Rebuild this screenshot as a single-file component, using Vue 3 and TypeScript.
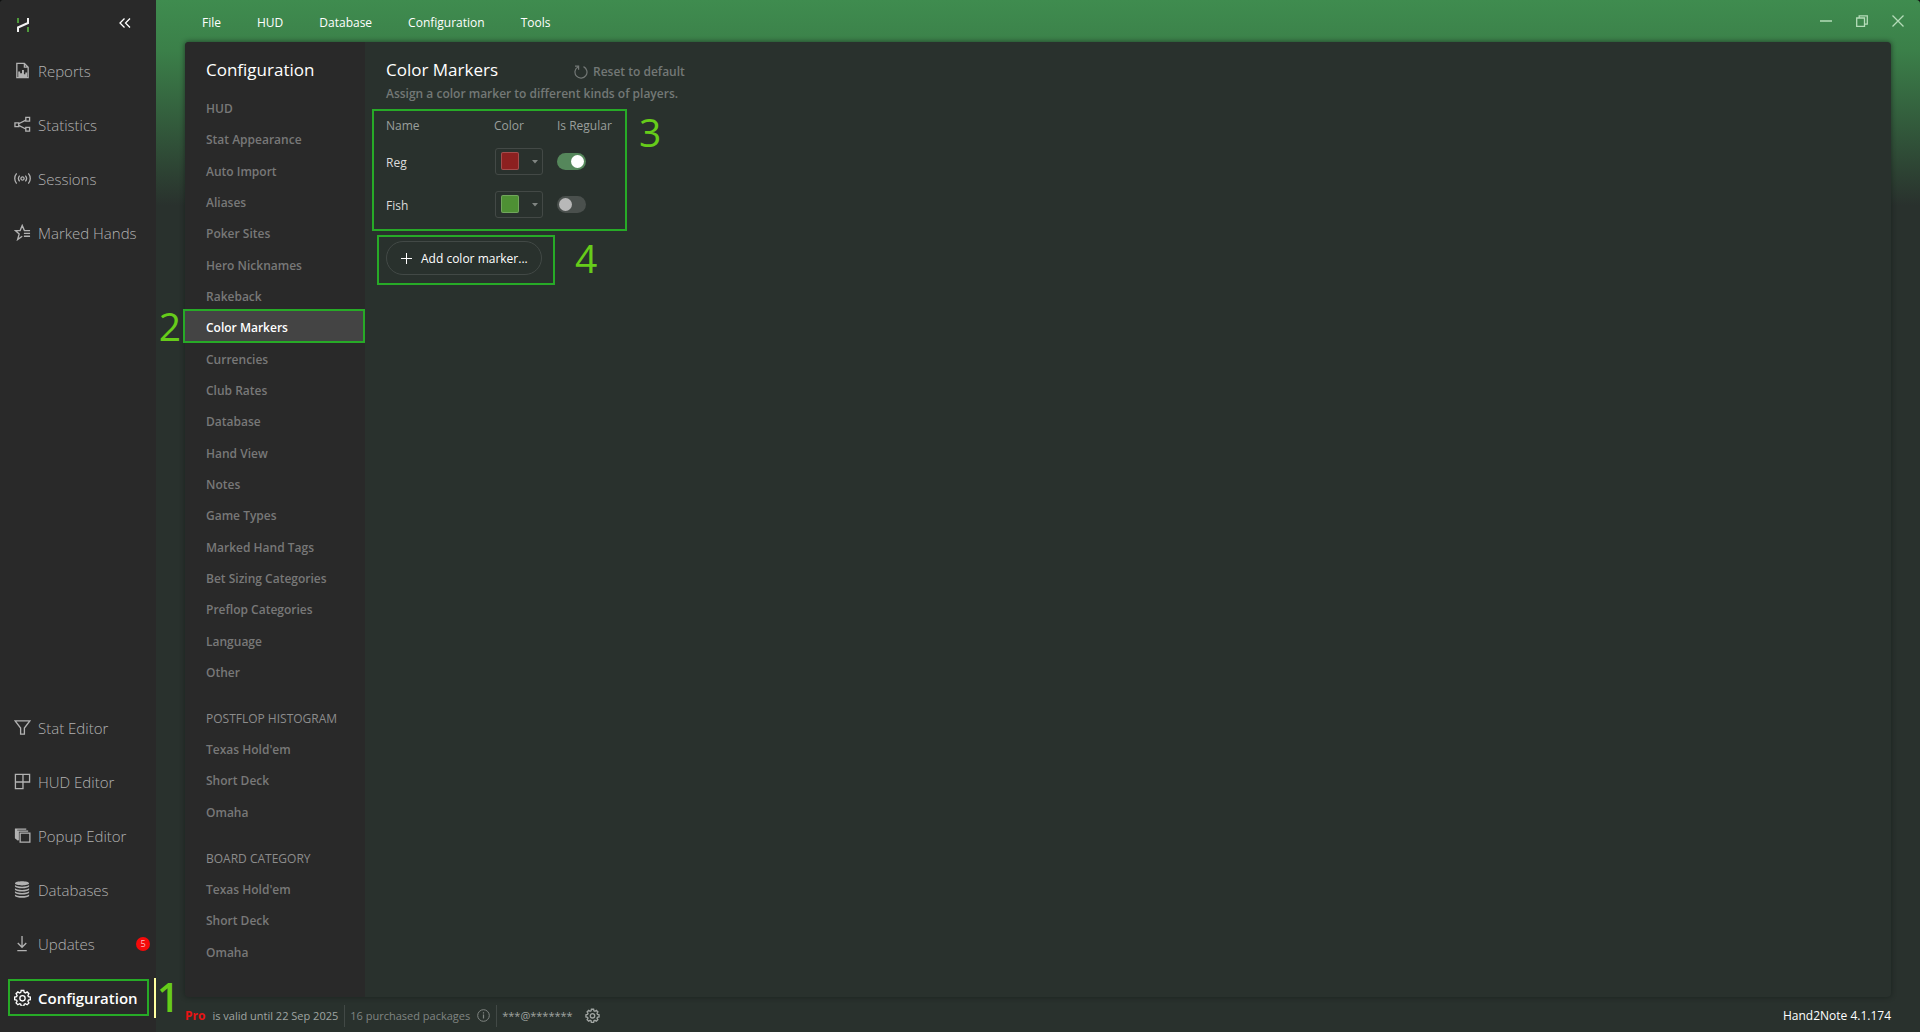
<script setup lang="ts">
import { ref } from 'vue'

interface SideItem {
  label: string
  stroke?: string
  fill?: string
  badge?: number
  active?: boolean
}

interface NavGroup {
  title?: string
  items: string[]
}

interface Marker {
  name: string
  color: string
  regular: boolean
}

const gear =
  'M7.6 1.6h2.8l.4 2 1.3.6 1.8-1.1 1.9 1.9-1.1 1.8.6 1.3 2 .4v2.8l-2 .4-.6 1.3 1.1 1.8-1.9 1.9-1.8-1.1-1.3.6-.4 2H7.6l-.4-2-1.3-.6-1.8 1.1-1.9-1.9 1.1-1.8-.6-1.3-2-.4V8.5l2-.4.6-1.3L2.2 5l1.9-1.9 1.8 1.1 1.3-.6zM11.8 9.9a2.800 2.800 0 1 1-5.6 0a2.800 2.800 0 1 1 5.6 0z'

const topItems: SideItem[] = [
  {
    label: 'Reports',
    stroke: 'M3 1.5h8l4 4v11H3z M11 1.5v4h4',
    fill: 'M4.5 16V10h2v2h2V8.5h2V13h1.500v-2H14v5z',
  },
  {
    label: 'Statistics',
    stroke: 'M1 7.2h4v4H1z M12.5 1.5h4v4h-4z M12.5 12h4v4h-4z M5 8.2l7.5-3.8 M5 10l7.5 3.8',
  },
  {
    label: 'Sessions',
    stroke:
      'M10.7 9a1.700 1.700 0 1 1-3.4 0a1.700 1.700 0 1 1 3.400 0z M6 6a4.500 4.500 0 0 0 0 6 M12 6a4.500 4.500 0 0 1 0 6 M2.8 3.5a8.500 8.500 0 0 0 0 11 M15.2 3.5a8.500 8.500 0 0 1 0 11',
  },
  {
    label: 'Marked Hands',
    stroke: 'M17 7h-6L8.7 1.5 6.5 7H1.500l4 3.500-1.700 6 4.900-3.600 M10.500 10H17 M10.500 13H17',
  },
]

const bottomItems: SideItem[] = [
  { label: 'Stat Editor', stroke: 'M1.200 2h15.600L11 9.500v6.500H7V9.500z' },
  { label: 'HUD Editor', stroke: 'M1.500 1.500h15v8h-7v7h-8z M9.500 1.500v8 M1.500 9.500h8' },
  {
    label: 'Popup Editor',
    stroke: 'M6.500 6.500h10.300v9.500H6.500z M4.200 14V4.400H15 M1.700 12V2.200H13',
    fill: 'M1 2h2.500v2H5v10H3.500L1 12z',
  },
  {
    label: 'Databases',
    fill: 'M1 2.500c0-3 15-3 15 0s-15 3-15 0z M1 4.300c2.500 2.400 12.500 2.400 15 0v1.600c-1.500 2.500-13.500 2.500-15 0z M1 7.600c2.500 2.400 12.500 2.400 15 0v1.600c-1.500 2.500-13.500 2.500-15 0z M1 10.900c2.500 2.400 12.500 2.400 15 0v1.600c-1.500 2.500-13.500 2.500-15 0z M1 14.200c2.500 2.400 12.500 2.400 15 0v1.600c-1.500 2.500-13.500 2.500-15 0z',
  },
  { label: 'Updates', stroke: 'M8.500 1v12 M4 8.500l4.500 4.500 4.500-4.500 M3.500 16.500h10', badge: 5 },
  { label: 'Configuration', stroke: gear, active: true },
]

const menus = ['File', 'HUD', 'Database', 'Configuration', 'Tools']

const groups: NavGroup[] = [
  {
    items: [
      'HUD', 'Stat Appearance', 'Auto Import', 'Aliases', 'Poker Sites', 'Hero Nicknames',
      'Rakeback', 'Color Markers', 'Currencies', 'Club Rates', 'Database', 'Hand View', 'Notes',
      'Game Types', 'Marked Hand Tags', 'Bet Sizing Categories', 'Preflop Categories', 'Language',
      'Other',
    ],
  },
  { title: 'POSTFLOP HISTOGRAM', items: ["Texas Hold'em", 'Short Deck', 'Omaha'] },
  { title: 'BOARD CATEGORY', items: ["Texas Hold'em", 'Short Deck', 'Omaha'] },
]

const palette = ['#8c2020', '#4e9034']

const markers = ref<Marker[]>([
  { name: 'Reg', color: '#8c2020', regular: true },
  { name: 'Fish', color: '#4e9034', regular: false },
])
</script>

<template>
  <div class="window">
    <aside class="sidebar">
      <header class="brand">
        <svg width="14" height="14" viewBox="0 0 14 14" fill="none" stroke-width="2">
          <path d="M2 0v5M12 9v5" stroke="#4f9a3c" />
          <path d="M2 14V9.500L12 5V0" stroke="#f2f2f2" />
        </svg>
        <button type="button" class="collapse" aria-label="Collapse sidebar">
          <svg width="12" height="10" viewBox="0 0 12 10" fill="none" stroke="currentColor" stroke-width="1.300">
            <path d="M5.500.5 1 5l4.500 4.500M11 .5 6.500 5 11 9.500" />
          </svg>
        </button>
      </header>
      <nav class="side-nav">
        <a v-for="item in topItems" :key="item.label" href="#" class="side-link">
          <svg class="side-icon" viewBox="0 0 18 18">
            <path v-if="item.fill" :d="item.fill" fill="currentColor" />
            <path v-if="item.stroke" :d="item.stroke" fill="none" stroke="currentColor" stroke-width="1.400" />
          </svg>
          <span>{{ item.label }}</span>
        </a>
        <div class="spacer"></div>
        <a
          v-for="item in bottomItems"
          :key="item.label"
          href="#"
          class="side-link"
          :class="{ active: item.active }"
        >
          <svg class="side-icon" viewBox="0 0 18 18">
            <path v-if="item.fill" :d="item.fill" fill="currentColor" />
            <path v-if="item.stroke" :d="item.stroke" fill="none" stroke="currentColor" stroke-width="1.400" />
          </svg>
          <span>{{ item.label }}</span>
          <span v-if="item.badge" class="badge">{{ item.badge }}</span>
          <template v-if="item.active">
            <span class="frame frame-side"></span>
            <span class="step step-side">1</span>
          </template>
        </a>
      </nav>
    </aside>

    <div class="main">
      <header class="titlebar">
        <nav class="menu">
          <button v-for="menu in menus" :key="menu" type="button">{{ menu }}</button>
        </nav>
        <div class="controls">
          <button type="button" aria-label="Minimize">
            <svg width="12" height="12" viewBox="0 0 12 12"><path d="M0 6h12" /></svg>
          </button>
          <button type="button" aria-label="Restore">
            <svg width="12" height="12" viewBox="0 0 12 12">
              <path d="M.7 3h7.800v8.300H.7zM3.200 3V.9h8.100v8.200H8.500" />
            </svg>
          </button>
          <button type="button" aria-label="Close">
            <svg width="12" height="12" viewBox="0 0 12 12"><path d="M.5.5l11 11M11.500.5l-11 11" /></svg>
          </button>
        </div>
      </header>

      <div class="panel">
        <nav class="config-nav">
          <h2>Configuration</h2>
          <section v-for="(group, g) in groups" :key="g">
            <h3 v-if="group.title">{{ group.title }}</h3>
            <ul>
              <li v-for="entry in group.items" :key="entry">
                <a href="#" :class="{ current: entry === 'Color Markers' }">
                  {{ entry }}
                  <template v-if="entry === 'Color Markers'">
                    <span class="frame frame-nav"></span>
                    <span class="step step-nav">2</span>
                  </template>
                </a>
              </li>
            </ul>
          </section>
        </nav>

        <main class="content">
          <div class="heading">
            <h1>Color Markers</h1>
            <button type="button" class="reset">
              <svg width="14" height="14" viewBox="0 0 14 14" fill="none" stroke="currentColor" stroke-width="1.200">
                <path d="M9.500 1.600a6 6 0 1 1-5.600.3M1 1.200h3.600v3.600" />
              </svg>
              Reset to default
            </button>
          </div>
          <p class="hint">Assign a color marker to different kinds of players.</p>

          <div class="marker-block">
            <table>
              <thead>
                <tr>
                  <th class="col-name">Name</th>
                  <th class="col-color">Color</th>
                  <th class="col-regular">Is Regular</th>
                </tr>
              </thead>
              <tbody>
                <tr v-for="marker in markers" :key="marker.name">
                  <td class="name">{{ marker.name }}</td>
                  <td>
                    <div class="picker">
                      <select v-model="marker.color" :aria-label="marker.name + ' color'">
                        <option v-for="c in palette" :key="c" :value="c" :aria-label="c"></option>
                      </select>
                      <span class="swatch" :style="{ background: marker.color }"></span>
                      <svg class="caret" width="6" height="4" viewBox="0 0 6 4">
                        <path d="M0 0h6L3 3.500z" fill="currentColor" />
                      </svg>
                    </div>
                  </td>
                  <td>
                    <input
                      v-model="marker.regular"
                      type="checkbox"
                      class="switch"
                      :aria-label="marker.name + ' is regular'"
                    />
                  </td>
                </tr>
              </tbody>
            </table>
            <span class="frame frame-table"></span>
            <span class="step step-table">3</span>
          </div>

          <div class="add-block">
            <button type="button" class="add">
              <svg width="11" height="11" viewBox="0 0 11 11" stroke="currentColor">
                <path d="M5.500 0v11M0 5.500h11" />
              </svg>
              Add color marker...
            </button>
            <span class="frame frame-add"></span>
            <span class="step step-add">4</span>
          </div>
        </main>
      </div>

      <footer class="status">
        <div class="cell license"><strong>Pro</strong><span>is valid until 22 Sep 2025</span></div>
        <div class="cell packages">
          <span>16 purchased packages</span>
          <svg width="13" height="13" viewBox="0 0 13 13" fill="none" stroke="currentColor">
            <circle cx="6.500" cy="6.500" r="5.800" />
            <path d="M6.500 5.500v4M6.500 3.200v1.200" stroke-width="1.200" />
          </svg>
        </div>
        <div class="cell account">
          <span>***@*******</span>
          <button type="button" aria-label="Account settings">
            <svg width="15" height="15" viewBox="0 0 18 19">
              <path :d="gear" fill="none" stroke="currentColor" stroke-width="1.700" />
            </svg>
          </button>
        </div>
        <span class="version">Hand2Note 4.1.174</span>
      </footer>
    </div>
  </div>
</template>

<style>
body {
  margin: 0;
  background: #101010;
}
</style>

<style scoped>
.window {
  display: flex;
  min-height: 100vh;
  border-radius: 4px 4px 0 0;
  overflow: hidden;
  background: #29312d;
  color: #fff;
  font-family: 'Open Sans', 'Noto Sans', sans-serif;
  font-size: 12px;
  line-height: 20px;
}

* {
  box-sizing: border-box;
}

a {
  color: inherit;
  text-decoration: none;
}

button {
  padding: 0;
  border: 0;
  background: none;
  color: inherit;
  font: inherit;
  cursor: pointer;
}

h1,
h2,
h3,
p,
ul {
  margin: 0;
  padding: 0;
  list-style: none;
}

svg {
  display: block;
  flex: none;
}

/* Sidebar */
.sidebar {
  display: flex;
  flex-direction: column;
  flex: none;
  width: 156px;
  background: #292929;
}

.brand {
  display: flex;
  align-items: center;
  justify-content: space-between;
  height: 44px;
  padding: 6px 25px 0 16px;
}

.collapse {
  padding-bottom: 4px;
}

.side-nav {
  display: flex;
  flex: 1;
  flex-direction: column;
  padding-bottom: 7px;
}

.spacer {
  flex: 1;
}

.side-link {
  position: relative;
  display: flex;
  align-items: center;
  gap: 7px;
  height: 54px;
  padding-left: 14px;
  color: #b2b2b2;
  font-size: 15px;
  font-weight: 300;
  white-space: nowrap;
}

.side-icon {
  width: 17px;
  height: 17px;
  margin-bottom: 2px;
}

.side-link.active {
  color: #fff;
  font-weight: 600;
}

.side-link.active::after {
  content: '';
  position: absolute;
  top: 7px;
  right: 0;
  width: 2px;
  height: 40px;
  background: #ffffa0;
}

.badge {
  width: 14px;
  height: 14px;
  margin-left: auto;
  margin-right: 6px;
  border-radius: 50%;
  background: #f50a0a;
  color: #fff;
  font-size: 9px;
  line-height: 14px;
  text-align: center;
}

/* Walkthrough frames and step numbers */
.frame {
  position: absolute;
  border: 2px solid #27aa27;
  pointer-events: none;
}

.step {
  position: absolute;
  color: #66cc1a;
  font-size: 39px;
  font-weight: 500;
  line-height: 40px;
}

.frame-side {
  inset: 8px 7px 9px 8px;
}

.step-side {
  top: 6px;
  left: 157px;
  font-weight: 600;
}

.frame-nav {
  inset: -2px 0 -1px -2px;
}

.step-nav {
  top: -5px;
  right: 184px;
}

.frame-table {
  inset: -2px auto -5px -14px;
  width: 255px;
}

.step-table {
  top: 1px;
  left: 253px;
}

.frame-add {
  inset: -6px auto -10px -9px;
  width: 178px;
}

.step-add {
  top: -3px;
  left: 189px;
}

/* Main column */
.main {
  display: flex;
  flex: 1;
  flex-direction: column;
  min-width: 0;
  padding: 0 29px;
  background: linear-gradient(#3f8c4f 0, #3b8049 50px, #29312d 206px);
}

.titlebar {
  display: flex;
  align-items: center;
  justify-content: space-between;
  height: 42px;
}

.menu {
  display: flex;
  gap: 36px;
  padding: 4px 0 0 17px;
}

.controls {
  display: flex;
  gap: 24px;
  margin-right: -13px;
  color: #b5dcb9;
}

.controls path {
  fill: none;
  stroke: currentColor;
  stroke-width: 1.300;
}

.panel {
  display: flex;
  flex: 1;
  border-radius: 4px;
  background: #29312d;
  box-shadow: 0 0 4px 1px rgba(20, 28, 24, 0.5);
}

.config-nav {
  flex: none;
  width: 180px;
  padding-top: 16px;
  border-radius: 4px 0 0 4px;
  background: #292929;
  color: #787878;
}

.config-nav h2,
.heading h1 {
  color: #fff;
  font-size: 17px;
  font-weight: 400;
  line-height: 24px;
}

.config-nav h2 {
  margin-bottom: 10px;
  padding-left: 21px;
}

.config-nav h3 {
  height: 31px;
  margin-top: 15px;
  padding: 2px 0 0 21px;
  color: #8c8c8c;
  font-size: 12px;
  font-weight: 400;
  line-height: 29px;
}

.config-nav a {
  position: relative;
  display: block;
  height: 31px;
  padding: 2px 0 0 21px;
  font-weight: 600;
  line-height: 29px;
}

.config-nav li:nth-child(3n + 2) {
  padding-bottom: 1px;
}

.config-nav a.current {
  background: #444;
  color: #fff;
}

.content {
  flex: 1;
  padding: 16px 21px;
}

.heading {
  display: flex;
  align-items: flex-start;
  gap: 76px;
  height: 26px;
}

.reset {
  display: flex;
  align-items: center;
  gap: 5px;
  padding-top: 4px;
  color: #737876;
  font-weight: 600;
}

.hint {
  color: #737876;
  font-weight: 600;
}

.marker-block,
.add-block {
  position: relative;
}

.marker-block {
  margin-top: 7px;
}

table {
  table-layout: fixed;
  width: 234px;
  border-collapse: collapse;
}

th,
td {
  padding: 0;
  text-align: left;
}

th {
  height: 29px;
  color: #9a9f9c;
  font-weight: 400;
}

td {
  height: 43px;
  color: #dcdcdc;
}

.name {
  padding-top: 2px;
}

.col-name {
  width: 108px;
}

.col-color {
  width: 63px;
}

.picker {
  position: relative;
  width: 48px;
  margin-left: 1px;
}

.picker select {
  display: block;
  width: 48px;
  height: 27px;
  border: 1px solid #434946;
  border-radius: 3px;
  background: transparent;
  appearance: none;
}

.swatch {
  position: absolute;
  top: 4px;
  left: 6px;
  width: 18px;
  height: 18px;
  border: 1px solid rgba(255, 255, 255, 0.2);
  border-radius: 2px;
  pointer-events: none;
}

.caret {
  position: absolute;
  top: 12px;
  right: 5px;
  color: #808582;
  pointer-events: none;
}

.switch {
  display: block;
  position: relative;
  width: 29px;
  height: 17px;
  margin: 0;
  border-radius: 9px;
  background: #4a504d;
  appearance: none;
}

.switch::before {
  content: '';
  position: absolute;
  top: 2px;
  left: 2px;
  width: 13px;
  height: 13px;
  border-radius: 50%;
  background: #b8b8b8;
}

.switch:checked {
  background: #55875b;
}

.switch:checked::before {
  left: 14px;
  background: #fff;
}

.add-block {
  margin-top: 15px;
}

.add {
  display: flex;
  align-items: center;
  gap: 9px;
  height: 34px;
  padding: 1px 13px 0 14px;
  border: 1px solid #424946;
  border-radius: 17px;
}

/* Status bar */
.status {
  display: flex;
  align-items: center;
  height: 35px;
  padding-top: 2px;
  color: #a0a5a2;
  font-size: 11px;
}

.cell {
  display: flex;
  align-items: center;
  gap: 7px;
  height: 22px;
  margin-right: 5px;
  padding-right: 6px;
  border-right: 1px solid #424946;
}

.license strong {
  color: #e81414;
  font-size: 12px;
  font-weight: 700;
}

.packages {
  color: #808582;
}

.account {
  gap: 12px;
  border-right: 0;
}

.version {
  margin-left: auto;
  color: #fff;
  font-size: 12px;
}
</style>
